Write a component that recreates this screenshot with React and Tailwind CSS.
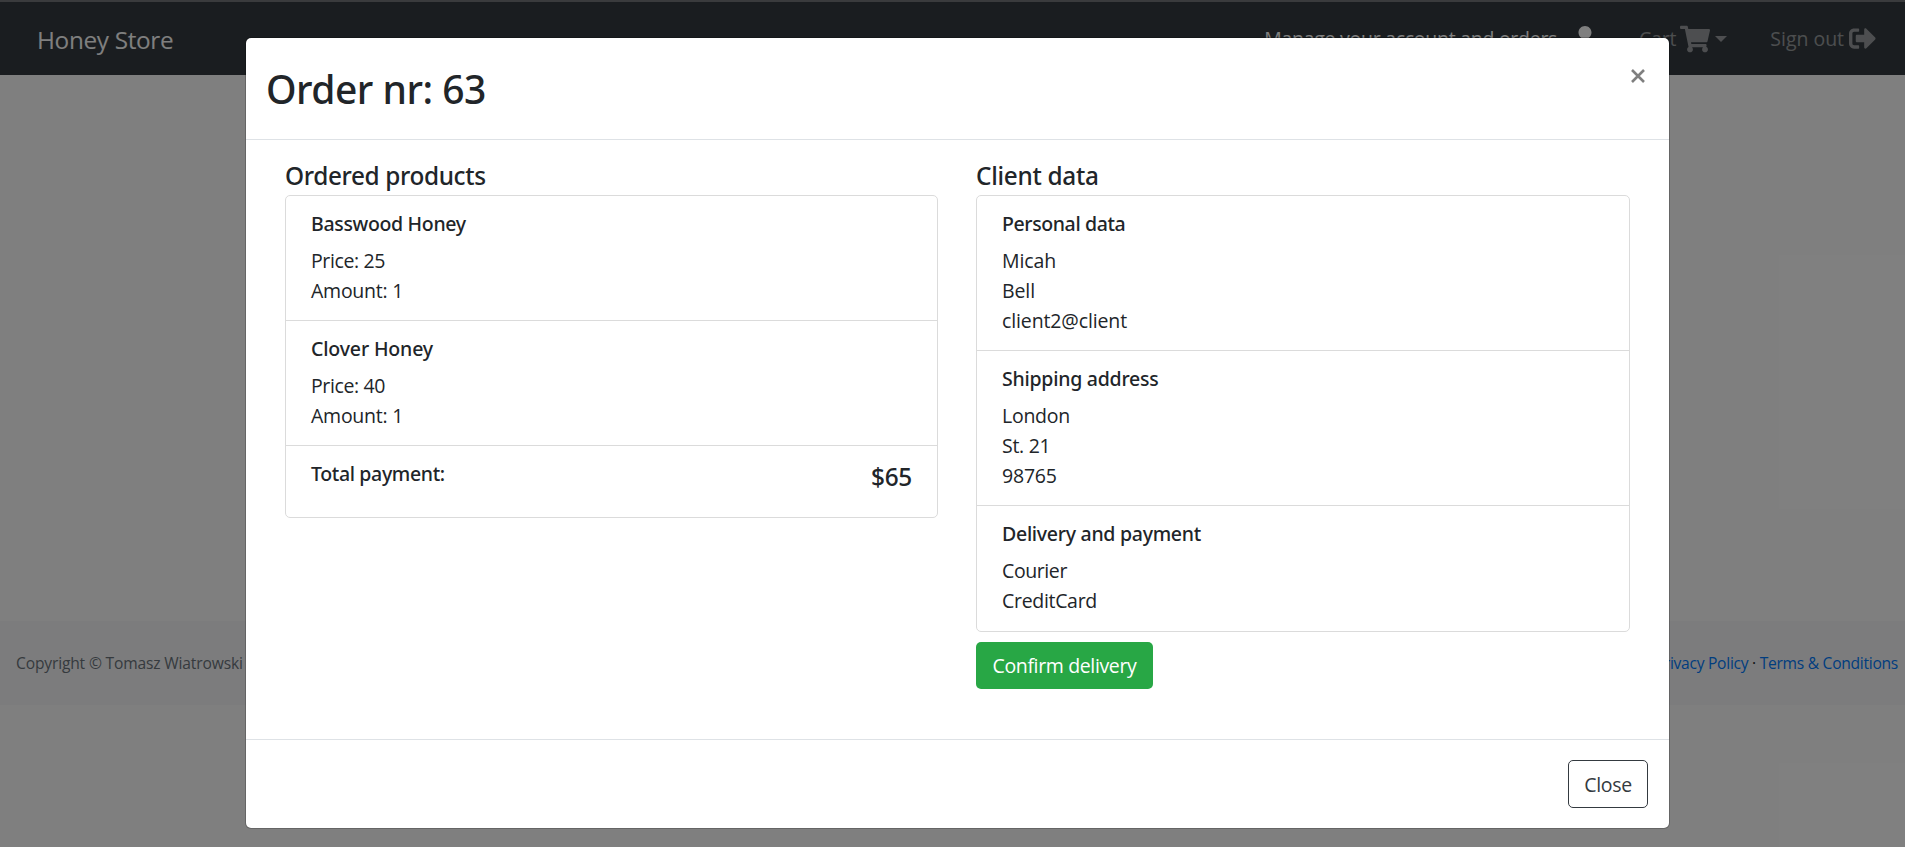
import { FaShoppingCart, FaUser, FaSignOutAlt } from "react-icons/fa";

const products = [
  { name: "Basswood Honey", price: 25, amount: 1, tracking: "tracking-[-0.33px]" },
  { name: "Clover Honey", price: 40, amount: 1, tracking: "tracking-[-0.15px]" },
];

const client = [
  {
    title: "Personal data",
    tracking: "tracking-[-0.39px]",
    lines: [
      { text: "Micah", tracking: "tracking-[-0.1px]" },
      { text: "Bell", tracking: "tracking-[-0.1px]" },
      { text: "client2@client", tracking: "tracking-[-0.12px]" },
    ],
  },
  {
    title: "Shipping address",
    tracking: "tracking-[-0.25px]",
    lines: [
      { text: "London", tracking: "tracking-[-0.25px]" },
      { text: "St. 21", tracking: "tracking-[-0.3px]" },
      { text: "98765", tracking: "tracking-[-0.2px]" },
    ],
  },
  {
    title: "Delivery and payment",
    tracking: "tracking-[-0.28px]",
    lines: [
      { text: "Courier", tracking: "tracking-[-0.4px]" },
      { text: "CreditCard", tracking: "tracking-[-0.31px]" },
    ],
  },
];

function Navbar() {
  return (
    <nav className="flex h-[73px] items-center bg-[#343a40] pl-[37px] pr-[29px] text-[19.5px] leading-[30px] text-white/50">
      <a className="pt-[2px] text-[24.375px] tracking-[-0.35px] text-white">Honey Store</a>
      <div className="ml-auto flex items-center whitespace-nowrap">
        <a className="flex items-center text-white">
          <span className="tracking-[-0.27px]">Manage your account and orders</span>
          <FaUser className="ml-[15px] size-[26px]" />
        </a>
        <a className="ml-[41px] flex items-center">
          <span className="tracking-[-0.2px]">Cart</span>
          <FaShoppingCart className="ml-[4px] size-[30px]" />
          <span className="ml-[5px] border-x-[6px] border-t-[6px] border-x-transparent border-t-current" />
        </a>
        <a className="ml-[43px] flex items-center">
          <span className="pt-px tracking-[-0.03px]">Sign out</span>
          <FaSignOutAlt className="ml-[5px] size-[27px]" />
        </a>
      </div>
    </nav>
  );
}

function Footer() {
  return (
    <footer className="mt-[546px] flex h-[84px] items-center justify-between bg-[#f8f9fa] pl-4 pr-[7px] text-[15.6px] leading-6">
      <span className="tracking-[-0.16px] text-[#6c757d]">Copyright © Tomasz Wiatrowski</span>
      <span className="tracking-[-0.27px] text-[#212529]">
        <a className="text-[#007bff]">Privacy Policy</a> · <a className="text-[#007bff]">Terms &amp; Conditions</a>
      </span>
    </footer>
  );
}

function ListGroup({ children }) {
  return (
    <ul className="divide-y divide-[#dbdbdb] rounded-[5px] border border-[#dbdbdb]">{children}</ul>
  );
}

function ItemTitle({ tracking, children }) {
  return (
    <h6 className={`mb-[10px] font-['Noto_Sans',sans-serif] text-[19.5px] font-medium leading-6 ${tracking}`}>
      {children}
    </h6>
  );
}

function SectionTitle({ tracking, children }) {
  return (
    <h5 className={`font-['Noto_Sans',sans-serif] text-[24.375px] font-medium leading-[30px] ${tracking}`}>
      {children}
    </h5>
  );
}

function OrderModal() {
  return (
    <div className="flex h-[792px] w-[1425px] flex-col rounded-[6px] border border-black/20 bg-white bg-clip-padding text-[19.5px] leading-[30px] text-[#212529]">
      <header className="flex h-[102px] items-start justify-between border-b border-[#dee2e6] pl-5 pr-[23px]">
        <h2 className="mt-[27px] font-['Noto_Sans',sans-serif] text-[39px] font-medium leading-[48px] tracking-[-0.5px]">
          Order nr: 63
        </h2>
        <button className="mt-[29px] flex size-[17px] items-center justify-center text-[#7f7f7f]" aria-label="Close">
          <svg viewBox="0 0 16 16" className="size-4" fill="none" stroke="currentColor" strokeWidth="2.6">
            <path d="M2 2l12 12M14 2L2 14" />
          </svg>
        </button>
      </header>
      <div className="flex flex-1 gap-[38px] px-[39px] pt-[21px]">
        <section className="w-[653px]">
          <SectionTitle tracking="tracking-[-0.37px]">Ordered products</SectionTitle>
          <div className="mt-[4px]">
            <ListGroup>
              {products.map((p) => (
                <li key={p.name} className="h-[125px] px-[25px] pt-[16px]">
                  <ItemTitle tracking={p.tracking}>{p.name}</ItemTitle>
                  <p className="tracking-[-0.37px]">Price: {p.price}</p>
                  <p className="tracking-[-0.25px]">Amount: {p.amount}</p>
                </li>
              ))}
              <li className="flex h-[71px] justify-between px-[25px] pt-[16px]">
                <ItemTitle tracking="tracking-[-0.35px]">Total payment:</ItemTitle>
                <SectionTitle tracking="tracking-[-0.3px]">$65</SectionTitle>
              </li>
            </ListGroup>
          </div>
        </section>
        <section className="w-[654px]">
          <SectionTitle tracking="tracking-[-0.3px]">Client data</SectionTitle>
          <div className="mt-[4px]">
            <ListGroup>
              {client.map((group) => (
                <li key={group.title} className="px-[25px] pb-[14px] pt-[16px] last:pb-[15px]">
                  <ItemTitle tracking={group.tracking}>{group.title}</ItemTitle>
                  {group.lines.map((line) => (
                    <p key={line.text} className={line.tracking}>{line.text}</p>
                  ))}
                </li>
              ))}
            </ListGroup>
          </div>
          <button className="mt-[10px] h-[47px] w-[177px] rounded-[5px] bg-[#28a745] pt-px tracking-[-0.36px] text-white">
            Confirm delivery
          </button>
        </section>
      </div>
      <footer className="flex h-[89px] items-center justify-end border-t border-[#dee2e6] pr-[21px]">
        <button className="h-[48px] w-[80px] rounded-[5px] border border-[#343a40] pt-px tracking-[-0.3px] text-[#343a40]">
          Close
        </button>
      </footer>
    </div>
  );
}

export default function App() {
  return (
    <div className="relative h-[847px] w-[1905px] overflow-hidden bg-white font-['Open_Sans','Noto_Sans',sans-serif]">
      <div className="h-[2px] bg-[#75777a]" />
      <Navbar />
      <Footer />
      <div className="absolute inset-0 flex justify-center bg-black/50 pl-[10px] pt-[37px]">
        <OrderModal />
      </div>
    </div>
  );
}
